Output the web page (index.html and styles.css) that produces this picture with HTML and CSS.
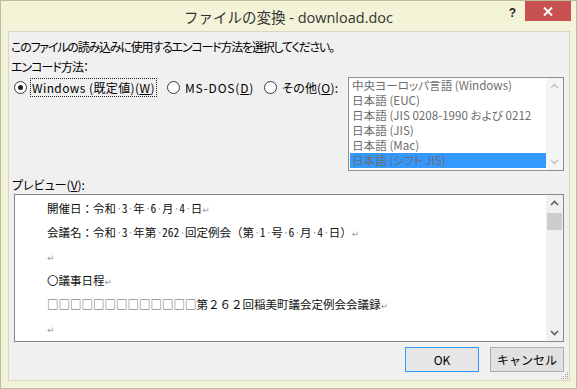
FILE: index.html
```html
<!DOCTYPE html>
<html lang="ja">
<head>
<meta charset="utf-8">
<title>ファイルの変換</title>
<link rel="stylesheet" href="styles.css">
</head>
<body>
<div class="window">
  <div class="titlebar">
    <div class="tb-spacer"></div>
    <div class="title">ファイルの変換 - download.doc</div>
    <div class="caption-buttons">
      <span class="help">?</span>
      <span class="close">
        <svg width="10" height="9" viewBox="0 0 10 9"><path d="M1 0.5 L9 8.5 M9 0.5 L1 8.5" stroke="#fff" stroke-width="2"/></svg>
      </span>
    </div>
  </div>
  <div class="client">
    <div class="intro">このファイルの読み込みに使用するエンコード方法を選択してください。</div>
    <div class="enc-label">エンコード方法：</div>
    <div class="options">
      <div class="radios">
        <label class="radio"><span class="circle checked"></span><span class="rlabel focus">Windows (既定値)(<u>W</u>)</span></label>
        <label class="radio r2"><span class="circle"></span><span class="rlabel">MS-DOS(<u>D</u>)</span></label>
        <label class="radio r3"><span class="circle"></span><span class="rlabel">その他(<u>O</u>):</span></label>
      </div>
      <div class="listbox">
        <ul class="items">
          <li>中央ヨーロッパ言語 (Windows)</li>
          <li>日本語 (EUC)</li>
          <li>日本語 (JIS 0208-1990 および 0212</li>
          <li>日本語 (JIS)</li>
          <li>日本語 (Mac)</li>
          <li class="sel">日本語 (シフト JIS)</li>
        </ul>
        <div class="vscroll light">
          <svg class="arr" width="17" height="17" viewBox="0 0 17 17"><path d="M5 10 L8.5 6.5 L12 10" fill="none" stroke="#c8c8c8" stroke-width="1.6"/></svg>
          <div class="track"></div>
          <svg class="arr" width="17" height="17" viewBox="0 0 17 17"><path d="M5 7 L8.5 10.5 L12 7" fill="none" stroke="#c8c8c8" stroke-width="1.6"/></svg>
        </div>
      </div>
    </div>
    <div class="preview-label">プレビュー(<u>V</u>):</div>
    <div class="preview">
      <div class="doc">
        <p>開催日：令和<span class="sp">·</span><span class="n">3</span><span class="sp">·</span>年<span class="sp">·</span><span class="n">6</span><span class="sp">·</span>月<span class="sp">·</span><span class="n">4</span><span class="sp">·</span>日<span class="ret">↵</span></p>
        <p>会議名：令和<span class="sp">·</span><span class="n">3</span><span class="sp">·</span>年第<span class="sp">·</span><span class="n">262</span><span class="sp">·</span>回定例会（第<span class="sp">·</span><span class="n">1</span><span class="sp">·</span>号<span class="sp">·</span><span class="n">6</span><span class="sp">·</span>月<span class="sp">·</span><span class="n">4</span><span class="sp">·</span>日）<span class="ret">↵</span></p>
        <p><span class="ret">↵</span></p>
        <p>〇議事日程<span class="ret">↵</span></p>
        <p><span class="box">□□□□□□□□□□□□□</span>第２６２回稲美町議会定例会会議録<span class="ret">↵</span></p>
        <p><span class="ret">↵</span></p>
      </div>
      <div class="vscroll">
        <svg class="arr" width="17" height="17" viewBox="0 0 17 17"><path d="M5 10 L8.5 6.5 L12 10" fill="none" stroke="#606060" stroke-width="1.6"/></svg>
        <div class="track"><div class="thumb"></div></div>
        <svg class="arr" width="17" height="17" viewBox="0 0 17 17"><path d="M5 7 L8.5 10.5 L12 7" fill="none" stroke="#606060" stroke-width="1.6"/></svg>
      </div>
    </div>
    <div class="buttons">
      <button class="btn default">OK</button>
      <button class="btn">キャンセル</button>
    </div>
    <div class="grip">
      <svg width="10" height="10" viewBox="0 0 10 10">
        <rect x="8" y="2" width="1" height="1" fill="#a0a0a0"/>
        <rect x="6" y="4" width="1" height="1" fill="#a0a0a0"/>
        <rect x="8" y="4" width="1" height="1" fill="#a0a0a0"/>
        <rect x="4" y="6" width="1" height="1" fill="#a0a0a0"/>
        <rect x="6" y="6" width="1" height="1" fill="#a0a0a0"/>
        <rect x="8" y="6" width="1" height="1" fill="#a0a0a0"/>
        <rect x="2" y="8" width="1" height="1" fill="#a0a0a0"/>
        <rect x="4" y="8" width="1" height="1" fill="#a0a0a0"/>
        <rect x="6" y="8" width="1" height="1" fill="#a0a0a0"/>
        <rect x="8" y="8" width="1" height="1" fill="#a0a0a0"/>
      </svg>
    </div>
  </div>
</div>
</body>
</html>
```
FILE: styles.css
```css
* { box-sizing: border-box; }
html, body { margin: 0; padding: 0; }
body {
  width: 577px;
  height: 389px;
  overflow: hidden;
  font-family: "Noto Sans CJK JP", "Noto Sans", sans-serif;
  background: #f3f3d8;
}
.window {
  width: 577px;
  height: 389px;
  background: #f3f3d8;
  border: 1px solid #bcbca0;
  padding: 0 6px 7px 7px;
  display: flex;
  flex-direction: column;
}
.titlebar {
  height: 30px;
  margin: 0 -6px 0 -7px;
  display: grid;
  grid-template-columns: 1fr auto 1fr;
  align-items: start;
}
.title {
  font-family: "Open Sans", "Noto Sans CJK JP", sans-serif;
  font-size: 14.5px;
  color: #333;
  line-height: 20px;
  margin-top: 7px;
}
.caption-buttons {
  justify-self: end;
  display: flex;
  align-items: flex-start;
  margin-right: 5px;
}
.help {
  font-family: "Liberation Sans", sans-serif;
  font-weight: bold;
  font-size: 12px;
  color: #222;
  line-height: 14px;
  margin-top: 5px;
  margin-right: 9px;
}
.close {
  width: 46px;
  height: 20px;
  background: #c75050;
  display: flex;
  align-items: center;
  justify-content: center;
}
.client {
  flex: 1;
  background: #f0f0f0;
  border: 1px solid #d6d6c4;
  display: flex;
  flex-direction: column;
  font-size: 12px;
  color: #000;
  position: relative;
}
.intro {
  margin: 7px 0 0 2px;
  line-height: 15px;
  font-feature-settings: "palt";
  letter-spacing: -1.2px;
}
.enc-label {
  margin: 5px 0 0 2px;
  line-height: 15px;
  font-feature-settings: "palt";
  letter-spacing: -1px;
}
.options {
  margin-top: 3px;
  display: flex;
  align-items: flex-start;
}
.radios {
  display: flex;
  align-items: center;
  margin: 1px 0 0 5px;
  height: 19px;
}
.radio {
  display: flex;
  align-items: center;
}
.r2 { margin-left: 10px; }
.r3 { margin-left: 8px; }
.circle {
  width: 13px;
  height: 13px;
  border-radius: 50%;
  border: 1px solid #3a3a3a;
  background: #fff;
  display: flex;
  align-items: center;
  justify-content: center;
}
.circle.checked::after {
  content: "";
  width: 5px;
  height: 5px;
  border-radius: 50%;
  background: #222;
}
.rlabel {
  margin-left: 3px;
  padding: 1px 1px;
  line-height: 15px;
  border: 1px dotted transparent;
  font-feature-settings: "palt";
  letter-spacing: 0.4px;
}
.r2 .rlabel { letter-spacing: 0.8px; }
.r3 .rlabel { letter-spacing: 0.2px; }
.rlabel.focus { border-color: #222; }
.listbox {
  margin-left: auto;
  margin-right: 5px;
  width: 216px;
  height: 94px;
  border: 1px solid #8e8f8f;
  background: #fff;
  display: flex;
}
.items {
  list-style: none;
  margin: 0;
  padding: 0 0 0 1px;
  flex: 1;
  overflow: hidden;
}
.items li {
  height: 15px;
  line-height: 15px;
  padding-left: 2px;
  color: #6d6d6d;
  white-space: nowrap;
  font-size: 11.6px;
  font-feature-settings: "palt";
}
.items li.sel { background: #3399ff; }
.vscroll {
  width: 17px;
  background: #f0f0f0;
  display: flex;
  flex-direction: column;
}
.vscroll.light { background: #f4f4f4; }
.arr { display: block; flex: none; }
.track { flex: 1; }
.thumb {
  height: 17px;
  background: #cdcdcd;
  margin: 1px 0 0 1px;
  width: 15px;
}
.preview-label {
  margin: 6px 0 0 3px;
  line-height: 15px;
  font-feature-settings: "palt";
}
.preview {
  margin: 2px 5px 0 5px;
  height: 148px;
  border: 1px solid #828790;
  background: #fff;
  display: flex;
}
.doc {
  flex: 1;
  padding: 1px 0 0 32px;
  font-size: 11.5px;
  overflow: hidden;
}
.doc p {
  margin: 0;
  line-height: 24px;
  height: 24px;
  white-space: nowrap;
  color: #111;
}
.n { font-feature-settings: "hwid"; }
.sp {
  color: #a0a0a0;
  display: inline-block;
  width: 5.75px;
  text-align: center;
}
.ret {
  font-family: "DejaVu Sans", sans-serif;
  color: #9a9a9a;
  font-size: 9px;
}
.box { color: #555; }
.buttons {
  margin: 5px 5px 0 0;
  display: flex;
  justify-content: flex-end;
  gap: 11px;
}
.btn {
  width: 74px;
  height: 25px;
  font-family: "Noto Sans CJK JP", sans-serif;
  font-size: 12px;
  color: #000;
  background: #e1e1e1;
  border: 1px solid #adadad;
  padding: 0;
  line-height: 20px;
}
.btn.default {
  border-color: #3399ff;
  background: #e6e6e6;
}
.grip {
  position: absolute;
  right: 0;
  bottom: 0;
  width: 10px;
  height: 10px;
  line-height: 0;
}
```
